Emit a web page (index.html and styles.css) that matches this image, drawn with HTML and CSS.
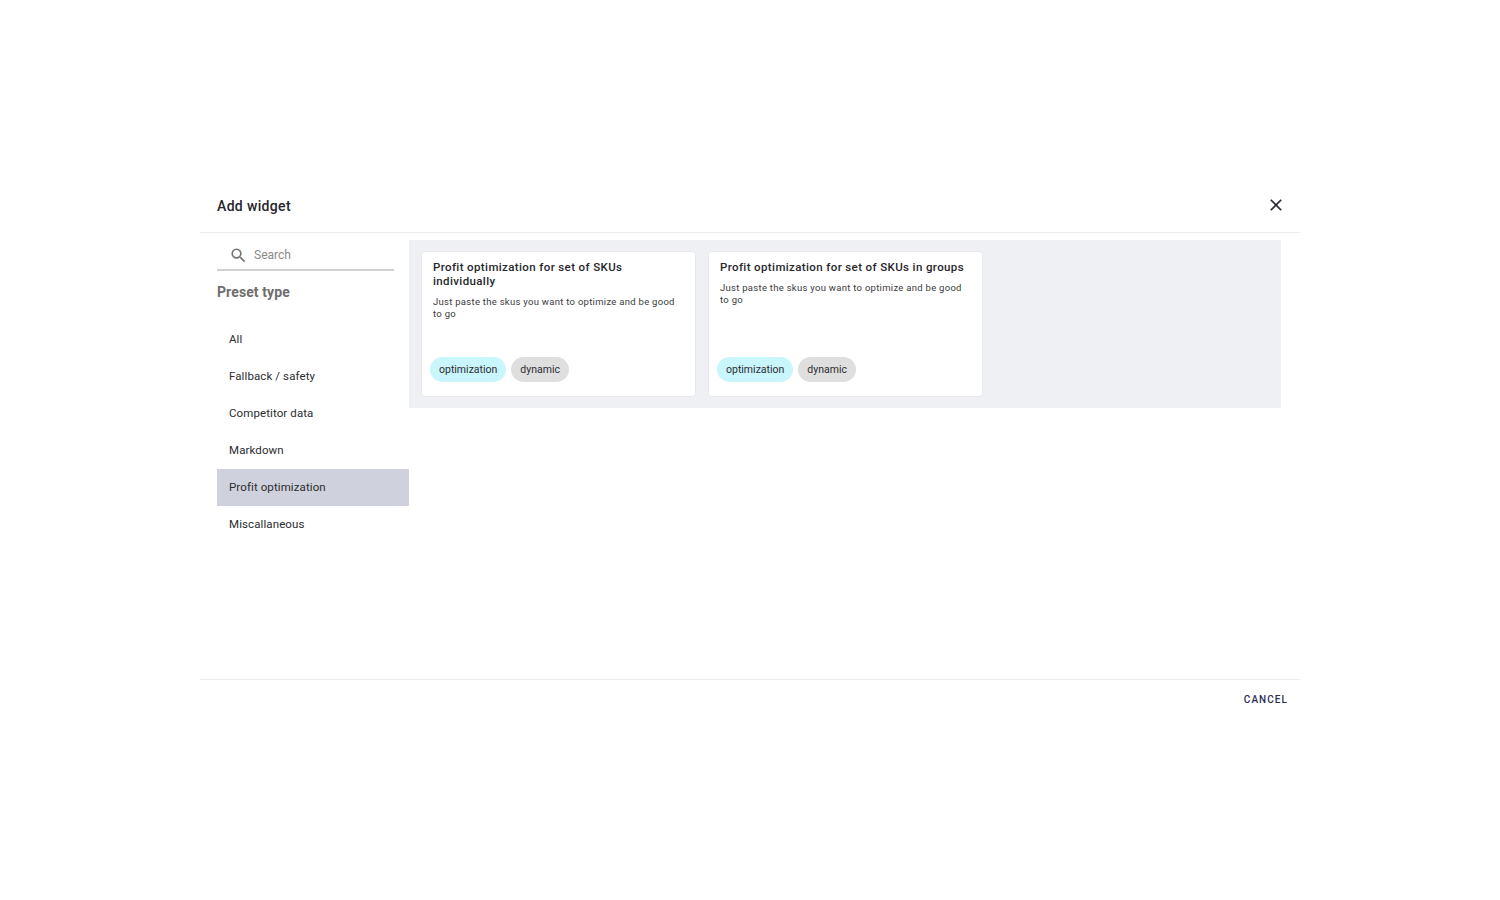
FILE: index.html
```html
<!DOCTYPE html>
<html lang="en">
<head>
<meta charset="utf-8">
<title>Add widget</title>
<link rel="stylesheet" href="styles.css">
</head>
<body>
<div class="dialog">
  <header class="head">
    <h1 class="title">Add widget</h1>
    <button class="close" aria-label="Close">
      <svg width="20" height="20" viewBox="0 0 24 24"><path fill="#2b2b33" d="M19 6.41 17.59 5 12 10.59 6.41 5 5 6.41 10.59 12 5 17.59 6.41 19 12 13.41 17.59 19 19 17.59 13.41 12z"/></svg>
    </button>
  </header>
  <main class="content">
    <aside class="side">
      <div class="search">
        <svg width="19" height="19" viewBox="0 0 24 24"><path fill="#757575" d="M15.5 14h-.79l-.28-.27A6.47 6.47 0 0 0 16 9.5 6.5 6.5 0 1 0 9.5 16c1.61 0 3.09-.59 4.23-1.57l.27.28v.79l5 4.99L20.49 19l-4.99-5zm-6 0C7.01 14 5 11.99 5 9.5S7.01 5 9.5 5 14 7.01 14 9.5 11.99 14 9.5 14z"/></svg>
        <span class="placeholder">Search</span>
      </div>
      <h2 class="preset">Preset type</h2>
      <ul class="types">
        <li class="type">All</li>
        <li class="type">Fallback / safety</li>
        <li class="type">Competitor data</li>
        <li class="type">Markdown</li>
        <li class="type active">Profit optimization</li>
        <li class="type">Miscallaneous</li>
      </ul>
    </aside>
    <section class="panel">
      <article class="card">
        <h3 class="card-title">Profit optimization for set of SKUs individually</h3>
        <p class="card-text">Just paste the skus you want to optimize and be good to go</p>
        <div class="tags"><span class="tag cyan">optimization</span><span class="tag grey">dynamic</span></div>
      </article>
      <article class="card">
        <h3 class="card-title">Profit optimization for set of SKUs in groups</h3>
        <p class="card-text">Just paste the skus you want to optimize and be good to go</p>
        <div class="tags"><span class="tag cyan">optimization</span><span class="tag grey">dynamic</span></div>
      </article>
    </section>
  </main>
  <footer class="foot"><button class="cancel">CANCEL</button></footer>
</div>
</body>
</html>
```
FILE: styles.css
```css
* { box-sizing: border-box; }
html, body { height: 100%; }
body {
  margin: 0;
  background: #fff;
  font-family: Roboto, "Liberation Sans", sans-serif;
  color: #26262b;
  display: flex;
  align-items: center;
  justify-content: center;
}
.dialog { width: 1100px; height: 538px; display: flex; flex-direction: column; background: #fff; }
.head {
  height: 52px;
  flex: none;
  display: flex;
  align-items: flex-start;
  justify-content: space-between;
  padding: 15px 12px 0 17px;
  border-bottom: 1px solid #ebebeb;
}
.title { margin: 0; font-size: 14px; line-height: 20px; font-weight: 500; letter-spacing: .35px; }
.close { width: 24px; height: 24px; padding: 0; margin: -3px 0 0 0; border: 0; background: none; display: flex; align-items: center; justify-content: center; }
.close svg { display: block; }
.content { flex: 1; min-height: 0; display: flex; align-items: flex-start; padding-left: 17px; }
.side { width: 192px; flex: none; }
.search {
  width: 177px;
  height: 38px;
  display: flex;
  align-items: center;
  gap: 6px;
  padding: 8px 0 0 12px;
  border-bottom: 2px solid #d0d0d0;
}
.search svg { flex: none; }
.placeholder { font-size: 12px; color: #8a8a8a; }
.preset { margin: 12px 0 20px; font-size: 14px; line-height: 18px; font-weight: 700; letter-spacing: .1px; color: #6e6e6e; }
.types { margin: 0; padding: 0; list-style: none; }
.type { height: 37px; line-height: 37px; padding-left: 12px; font-size: 11.5px; letter-spacing: .1px; color: #2c2c30; }
.type.active { background: #cfd2dc; }
.panel {
  width: 872px;
  margin-top: 7px;
  padding: 11px 12px;
  background: #eff0f4;
  display: flex;
  gap: 12px;
}
.card {
  width: 275px;
  height: 146px;
  padding: 8px 8px 14px;
  background: #fff;
  border: 1px solid #e9e9ec;
  border-radius: 4px;
  display: flex;
  flex-direction: column;
}
.card-title { margin: 0 3px; font-size: 11.5px; line-height: 14px; font-weight: 500; letter-spacing: .38px; color: #26262b; }
.card-text { margin: 8px 9px 0 3px; font-size: 9.5px; line-height: 12px; letter-spacing: .28px; color: #3c3c40; }
.tags { margin-top: auto; display: flex; gap: 5px; }
.tag { height: 25px; line-height: 25px; padding: 0 9px; border-radius: 13px; font-size: 10.5px; color: #2c2c30; }
.cyan { background: #c9f5fd; }
.grey { background: #dfdfdf; }
.foot {
  height: 40px;
  flex: none;
  display: flex;
  justify-content: flex-end;
  align-items: center;
  padding-right: 12px;
  border-top: 1px solid #ebebeb;
}
.cancel { padding: 0; border: 0; background: none; font-family: inherit; font-size: 10px; font-weight: 500; letter-spacing: 1.05px; color: #2a2f52; }
```
